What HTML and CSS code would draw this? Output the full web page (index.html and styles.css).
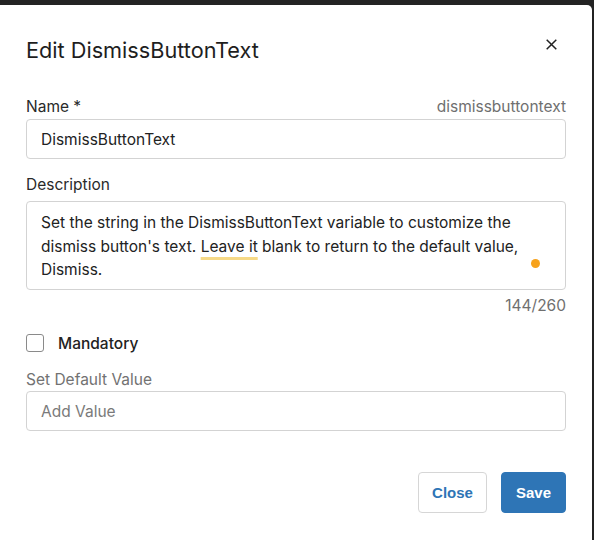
FILE: index.html
```html
<!DOCTYPE html>
<html>
<head>
<meta charset="utf-8">
<link rel="stylesheet" href="styles.css">
</head>
<body>
<div class="dialog">
  <div class="header">
    <h1 class="title">Edit DismissButtonText</h1>
    <button class="close-x" aria-label="Close">
      <svg width="11" height="11" viewBox="0 0 11 11"><path d="M0.7 0.7L10.3 10.3M10.3 0.7L0.7 10.3" stroke="#222" stroke-width="1.5" fill="none"/></svg>
    </button>
  </div>
  <div class="field name-field">
    <div class="label-row name-row"><span class="label">Name *</span><span class="key">dismissbuttontext</span></div>
    <div class="input">DismissButtonText</div>
  </div>
  <div class="field">
    <div class="label-row desc-row"><span class="label">Description</span></div>
    <div class="textarea">Set the string in the DismissButtonText variable to customize the dismiss button's text. <span class="spell">Leave it</span> blank to return to the default value, Dismiss.<span class="dot"></span></div>
    <div class="counter">144/260</div>
  </div>
  <label class="check-row"><span class="checkbox"></span><span class="check-label">Mandatory</span></label>
  <div class="field">
    <div class="label-row default-row"><span class="label muted">Set Default Value</span></div>
    <div class="input placeholder">Add Value</div>
  </div>
  <div class="footer">
    <button class="btn btn-outline">Close</button>
    <button class="btn btn-primary">Save</button>
  </div>
</div>
</body>
</html>
```
FILE: styles.css
```css
html, body {
  margin: 0;
  padding: 0;
  background: #232323;
  height: 540px;
  overflow: hidden;
}
body {
  padding-top: 5px;
  font-family: Inter, "Noto Sans", sans-serif;
  color: #222;
}
.dialog {
  width: 592px;
  height: 540px;
  background: #fff;
  border-top-right-radius: 5px;
  box-sizing: border-box;
  padding: 0 26px;
}
.header {
  display: flex;
  justify-content: space-between;
  align-items: flex-start;
  height: 91px;
}
.title {
  margin: 31px 0 0 0;
  font-size: 21.7px;
  font-weight: 400;
  line-height: 28px;
  color: #1e1e1e;
}
.close-x {
  margin: 34px 9px 0 0;
  border: none;
  background: none;
  padding: 0;
  width: 11px;
  height: 11px;
  display: flex;
}
.field {
  display: flex;
  flex-direction: column;
}
.name-field { margin-bottom: 15px; }
.label-row {
  display: flex;
  justify-content: space-between;
  align-items: center;
  height: 20px;
  font-size: 15.5px;
}
.name-row { margin-bottom: 3px; }
.desc-row { margin-bottom: 7px; }
.default-row { margin-bottom: 2px; }
.label { color: #2a2a2a; }
.label.muted { color: #727272; }
.key { color: #6f6f6f; }
.input {
  height: 40px;
  box-sizing: border-box;
  border: 1px solid #d3d3d3;
  border-radius: 4px;
  padding: 0 14px;
  display: flex;
  align-items: center;
  font-size: 15.5px;
  color: #222;
}
.input.placeholder { color: #7a7a7a; }
.textarea {
  position: relative;
  height: 89px;
  box-sizing: border-box;
  border: 1px solid #d3d3d3;
  border-radius: 4px;
  padding: 9px 38px 0 14px;
  font-size: 15.5px;
  line-height: 23.5px;
  color: #222;
}
.spell {
  text-decoration: underline;
  text-decoration-color: #f6d987;
  text-decoration-thickness: 3px;
  text-underline-offset: 5px;
}
.dot {
  position: absolute;
  right: 25px;
  top: 57px;
  width: 9px;
  height: 9px;
  border-radius: 50%;
  background: #f7a21b;
}
.counter {
  text-align: right;
  font-size: 15.5px;
  color: #6f6f6f;
  margin-top: 6px;
  line-height: 20px;
}
.check-row {
  display: flex;
  align-items: center;
  gap: 14px;
  margin-top: 17px;
  height: 20px;
  margin-bottom: 16px;
}
.checkbox {
  width: 18px;
  height: 18px;
  box-sizing: border-box;
  border: 1px solid #8a8a8a;
  border-radius: 3px;
}
.check-label {
  font-size: 15.5px;
  font-weight: 500;
  color: #222;
}
.footer {
  display: flex;
  justify-content: flex-end;
  gap: 14px;
  margin-top: 41px;
}
.btn {
  height: 41px;
  box-sizing: border-box;
  border-radius: 4px;
  font-family: "Liberation Sans", Arial, sans-serif;
  font-weight: 700;
  font-size: 15px;
  padding: 0 13px;
  cursor: pointer;
}
.btn-outline {
  background: #fff;
  border: 1px solid #d6d6d6;
  color: #2e75b6;
}
.btn-primary {
  background: #2e75b6;
  border: 1px solid #2e75b6;
  color: #fff;
  padding: 0 14px;
}
```
